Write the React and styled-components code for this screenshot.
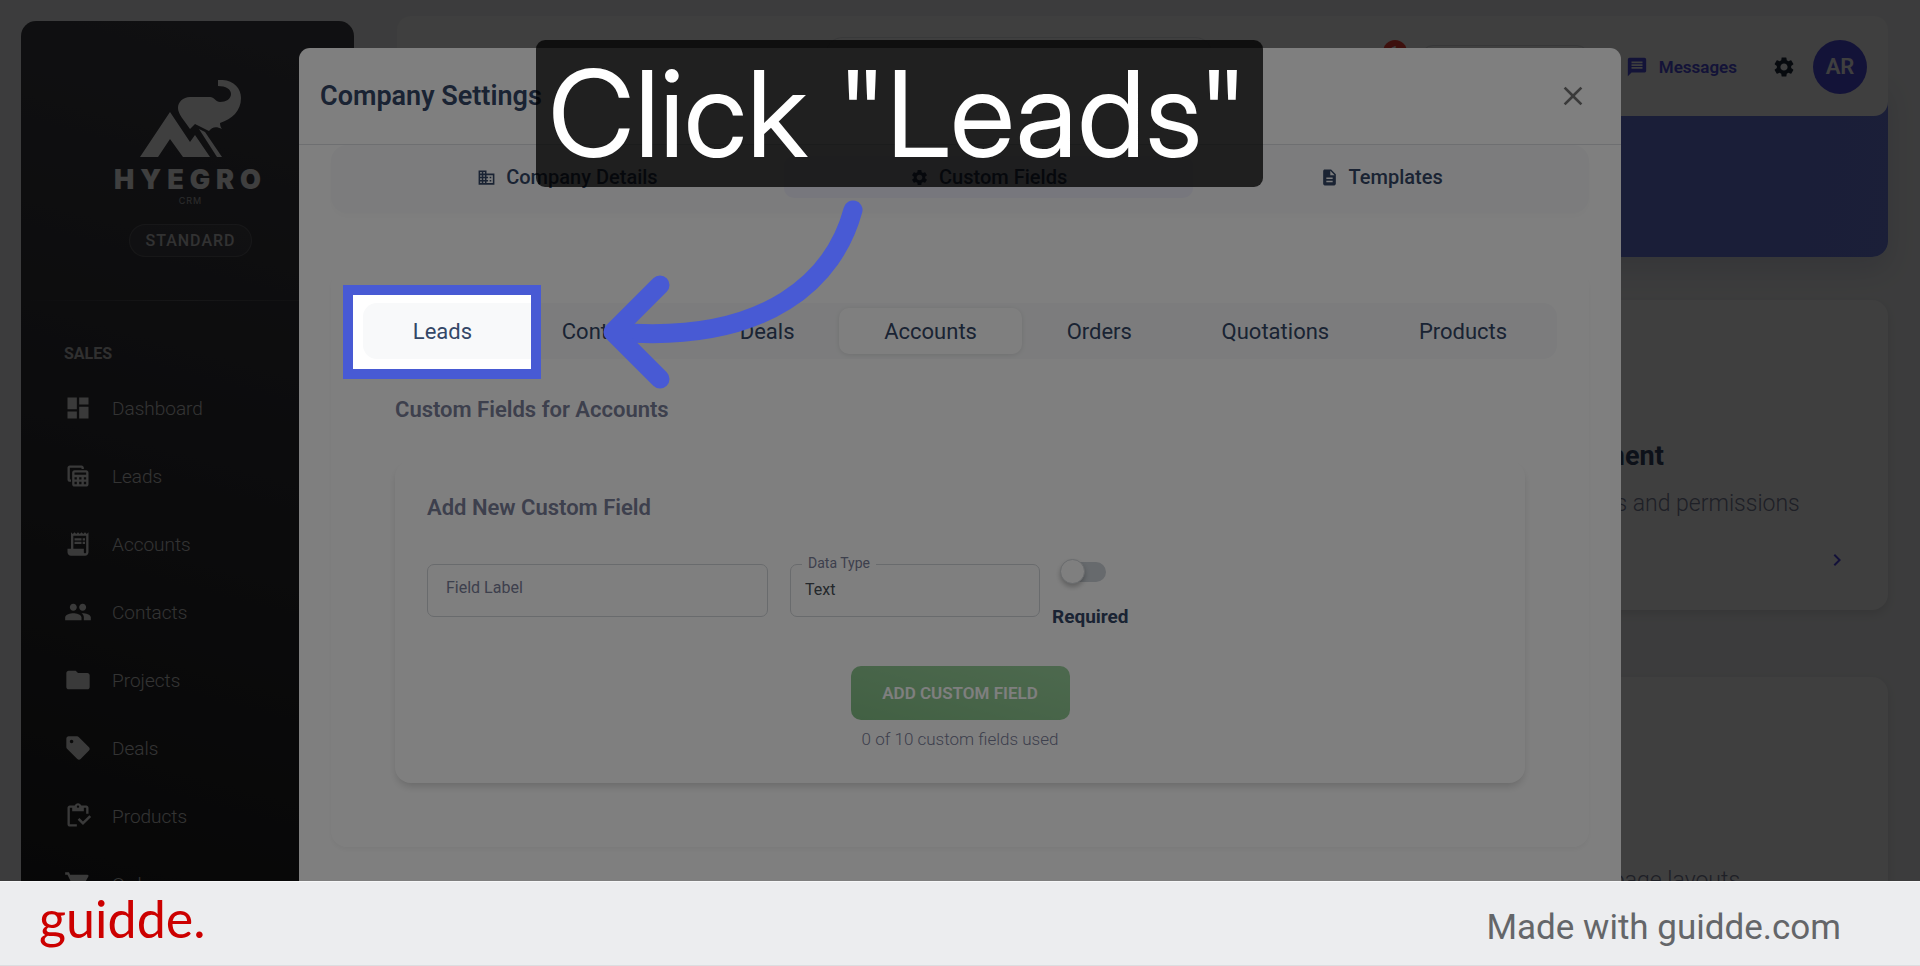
import React from 'react'
import styled, { createGlobalStyle } from 'styled-components'
import {
  MdBusiness,
  MdChevronRight,
  MdClose,
  MdDashboard,
  MdDescription,
  MdFolder,
  MdMessage,
  MdNotifications,
  MdPeople,
  MdReceiptLong,
  MdSell,
  MdSettings,
  MdShoppingCart,
  MdTableView,
} from 'react-icons/md'

const GlobalStyle = createGlobalStyle`
  *, *::before, *::after {
    box-sizing: border-box;
  }
  body {
    margin: 0;
    font-family: Roboto, 'Liberation Sans', sans-serif;
    color: #344767;
  }
  button, input, select {
    font-family: inherit;
  }
  h1, h2, h3, p, ul {
    margin: 0;
    padding: 0;
  }
`

const Page = styled.div`
  display: flex;
  flex-direction: column;
  height: 100vh;
`

const Stage = styled.div`
  position: relative;
  display: flex;
  flex: 1;
  min-height: 0;
  overflow: hidden;
  background: #f1f2f4;
`

/* sidebar */

const Sidebar = styled.aside`
  flex: none;
  width: 333px;
  height: 1000px;
  margin: 21px 43px 0 21px;
  padding-top: 59px;
  border-radius: 15px;
  background: linear-gradient(195deg, #42424a, #191919);
  color: #fff;
`

const Brand = styled.div`
  display: flex;
  flex-direction: column;
  align-items: center;
  padding-left: 6px;
`

const BrandName = styled.div`
  margin-top: 6px;
  font: 900 27px/32px Inter, sans-serif;
  letter-spacing: 6px;
`

const BrandSub = styled.div`
  font: 400 9px/10px Inter, sans-serif;
  letter-spacing: 1px;
  opacity: 0.6;
`

const Plan = styled.div`
  margin-top: 18px;
  padding: 0 15px;
  border: 1px solid rgba(255, 255, 255, 0.15);
  border-radius: 17px;
  background: rgba(255, 255, 255, 0.06);
  font-size: 16px;
  font-weight: 500;
  line-height: 31px;
  letter-spacing: 1px;
  color: #c8c8c8;
`

const Rule = styled.hr`
  height: 1px;
  margin: 43px 0 0;
  border: 0;
  background: linear-gradient(90deg, transparent, rgba(255, 255, 255, 0.2), transparent);
`

const NavTitle = styled.h2`
  margin: 41px 0 0 43px;
  font-size: 16px;
  line-height: 24px;
  font-weight: 700;
  color: #c0c0c0;
`

const NavList = styled.ul`
  margin-top: 8px;
  list-style: none;
`

const NavLink = styled.a`
  display: flex;
  align-items: center;
  gap: 20px;
  height: 68px;
  padding-left: 43px;
  font-size: 19px;
  font-weight: 300;
  color: #d0d0d0;
  text-decoration: none;
  svg {
    font-size: 28px;
    color: #e8e8e8;
  }
`

/* page behind the dialog */

const Main = styled.main`
  flex: 1;
  min-width: 0;
  padding: 16px 32px 0 0;
`

const TopBar = styled.header`
  position: relative;
  z-index: 1;
  display: flex;
  align-items: center;
  height: 100px;
  padding: 2px 21px 0 0;
  border-radius: 14px;
  background: #fcfcfc;
`

const Search = styled.input`
  width: 388px;
  height: 60px;
  margin: 0 auto 0 428px;
  padding: 0 24px;
  border: 1px solid #e2e4e8;
  border-radius: 18px;
  background: #fff;
  font-size: 18px;
`

const Bell = styled.button`
  position: relative;
  display: grid;
  place-items: center;
  width: 40px;
  height: 40px;
  margin-right: 20px;
  border: 0;
  background: none;
  font-size: 24px;
  color: #344767;
`

const Badge = styled.span`
  position: absolute;
  top: -7px;
  right: -6px;
  width: 24px;
  height: 24px;
  border-radius: 50%;
  background: #f44335;
  font-size: 14px;
  line-height: 24px;
  color: #fff;
`

const Workspace = styled.button`
  width: 168px;
  height: 44px;
  margin-right: 37px;
  border: 1px solid #dcdee2;
  border-radius: 12px;
  background: none;
`

const Messages = styled.button`
  display: flex;
  align-items: center;
  gap: 11px;
  margin-right: 35px;
  padding: 0;
  border: 0;
  background: none;
  font-size: 17px;
  font-weight: 600;
  color: #4f4ce0;
  svg {
    font-size: 22px;
  }
`

const Gear = styled.button`
  display: grid;
  place-items: center;
  margin-right: 17px;
  padding: 0;
  border: 0;
  background: none;
  font-size: 24px;
  color: #1e293b;
`

const Avatar = styled.div`
  width: 54px;
  height: 54px;
  border-radius: 50%;
  background: #4f4ce0;
  font-size: 22px;
  font-weight: 600;
  line-height: 54px;
  text-align: center;
  color: #fff;
`

const Banner = styled.div`
  height: 181px;
  margin-top: -40px;
  border-radius: 16px;
  background: linear-gradient(100deg, #5c66f0, #6c7ce0);
  box-shadow: 0 12px 28px rgba(40, 50, 110, 0.14);
`

const Cards = styled.div`
  display: grid;
  grid-template-columns: repeat(3, 1fr);
  gap: 67px 24px;
  margin-top: 43px;
`

const Card = styled.article`
  display: flex;
  flex-direction: column;
  height: 310px;
  padding: 32px 39px 38px 34px;
  border-radius: 16px;
  background: #fdfdfd;
  box-shadow: 0 4px 10px rgba(0, 0, 0, 0.1);
`

const CardIcon = styled.div`
  display: grid;
  place-items: center;
  width: 76px;
  height: 76px;
  margin-bottom: 32px;
  border-radius: 14px;
  background: #eef0ff;
  font-size: 36px;
  color: #4f46e5;
`

const CardTitle = styled.h3`
  font-size: 27px;
  line-height: 32px;
  font-weight: 700;
`

const CardText = styled.p`
  margin-top: 18px;
  font-size: 23px;
  line-height: 28px;
  font-weight: 300;
  color: #7b809a;
  white-space: nowrap;
`

const CardArrow = styled(MdChevronRight)`
  margin: auto 0 0 auto;
  font-size: 24px;
  color: #4f46e5;
`

/* dialog */

const Backdrop = styled.div`
  position: absolute;
  inset: 0;
  z-index: 2;
  display: flex;
  align-items: flex-start;
  justify-content: center;
  padding-top: 48px;
  background: rgba(0, 0, 0, 0.5);
`

const Dialog = styled.section`
  position: relative;
  width: 1322px;
  max-width: calc(100% - 64px);
  min-height: 900px;
  border-radius: 11px;
  background: #fff;
`

const DialogHead = styled.header`
  display: flex;
  align-items: center;
  justify-content: space-between;
  height: 97px;
  padding: 0 32px 0 21px;
  border-bottom: 1px solid #dcdee2;
`

const DialogTitle = styled.h1`
  font-size: 27px;
  line-height: 32px;
  font-weight: 600;
`

const CloseButton = styled.button`
  display: grid;
  place-items: center;
  padding: 0;
  border: 0;
  background: none;
  font-size: 32px;
  color: #757575;
`

const DialogBody = styled.div`
  padding: 0 32px;
`

const Tabs = styled.div`
  display: flex;
  padding: 11px 20px 15px;
  border-radius: 16px;
  background: #f8f9fa;
  box-shadow: 0 4px 6px rgba(0, 0, 0, 0.02);
`

const Tab = styled.button`
  display: flex;
  flex: 1 1 auto;
  align-items: center;
  justify-content: center;
  gap: 10px;
  height: 42px;
  padding: 0;
  border: 0;
  border-radius: 10px;
  background: ${({ $active }) => ($active ? '#eeeefb' : 'none')};
  font-size: 20px;
  font-weight: 500;
  color: #344767;
  svg {
    font-size: 19px;
  }
`

const Panel = styled.div`
  margin-top: 57px;
  padding: 33px 32px 32px;
  border-radius: 16px;
  background: #fff;
  box-shadow: 0 3px 5px rgba(0, 0, 0, 0.04);
`

const SubTabs = styled.div`
  display: flex;
  padding: 5px;
  border-radius: 14px;
  background: #f8f9fa;
`

const SubTab = styled.button`
  flex: 1 1 auto;
  height: 46px;
  padding: 0;
  border: 0;
  border-radius: 10px;
  background: ${({ $active }) => ($active ? '#fff' : 'none')};
  box-shadow: ${({ $active }) => ($active ? '0 1px 5px rgba(0, 0, 0, 0.1)' : 'none')};
  font-size: 22px;
  color: #344767;
`

const Section = styled.div`
  padding: 37px 32px 0;
`

const Heading = styled.h2`
  font-size: 22px;
  line-height: 28px;
  font-weight: 600;
  color: #7b809a;
`

const FieldCard = styled.form`
  display: flex;
  flex-direction: column;
  margin: 37px 0 32px;
  padding: 33px 32px 32px;
  border-radius: 16px;
  box-shadow: 0 5px 8px -2px rgba(0, 0, 0, 0.18);
`

const FieldRow = styled.div`
  display: flex;
  align-items: flex-start;
  gap: 12px;
  margin-top: 42px;
`

const Inputs = styled.div`
  display: flex;
  gap: 22px;
`

const TextInput = styled.input`
  width: 341px;
  height: 53px;
  padding: 0 18px 6px;
  border: 1px solid #d2d6da;
  border-radius: 7px;
  background: none;
  font-size: 16px;
  &::placeholder {
    color: #7b809a;
    opacity: 1;
  }
`

const SelectBox = styled.div`
  position: relative;
  width: 250px;
`

const SelectLabel = styled.label`
  position: absolute;
  top: -11px;
  left: 12px;
  padding: 0 6px;
  background: #fff;
  font-size: 14px;
  line-height: 20px;
  color: #7b809a;
`

const Select = styled.select`
  width: 100%;
  height: 53px;
  padding: 0 14px 2px;
  border: 1px solid #d2d6da;
  border-radius: 7px;
  background: none;
  appearance: none;
  font-size: 16px;
  color: #495057;
`

const Toggle = styled.label`
  display: flex;
  flex-direction: column;
  gap: 17px;
  height: 70px;
  font-size: 19px;
  line-height: 24px;
  font-weight: 700;
`

const Switch = styled.input`
  position: relative;
  appearance: none;
  width: 42px;
  height: 20px;
  margin: -2px 0 6px 12px;
  border-radius: 10px;
  background: #ced4da;
  &::before {
    content: '';
    position: absolute;
    top: -3px;
    left: -4px;
    width: 25px;
    height: 25px;
    border: 1px solid #d2d6da;
    border-radius: 50%;
    background: #fff;
    box-shadow: 0 3px 5px rgba(0, 0, 0, 0.25);
  }
`

const AddButton = styled.button`
  align-self: center;
  width: 219px;
  height: 54px;
  margin-top: 32px;
  border: 0;
  border-radius: 10px;
  background: linear-gradient(195deg, #66bb6a, #43a047);
  font-size: 17px;
  font-weight: 600;
  text-transform: uppercase;
  color: #fff;
  opacity: 0.65;
`

const Usage = styled.p`
  margin-top: 7px;
  font-size: 17px;
  line-height: 24px;
  font-weight: 300;
  text-align: center;
  color: #7b809a;
`

/* guide overlay */

const Spotlight = styled.div`
  position: absolute;
  top: 237px;
  left: 44px;
  width: 198px;
  height: 94px;
  border: 10px solid #485ad4;
  box-shadow: 0 0 0 3000px rgba(0, 0, 0, 0.5);
  pointer-events: none;
`

const Callout = styled.div`
  position: absolute;
  top: -8px;
  left: 237px;
  width: 727px;
  padding: 0 12px;
  border-radius: 9px;
  background: rgba(0, 0, 0, 0.75);
  font-family: 'Inter Display', Inter, sans-serif;
  font-size: 120px;
  font-variation-settings: 'opsz' 32;
  line-height: 147px;
  white-space: nowrap;
  color: #fff;
`

const Arrow = styled.svg`
  position: absolute;
  top: 142px;
  left: 291px;
  width: 290px;
  height: 210px;
  pointer-events: none;
`

const Footer = styled.footer`
  display: flex;
  flex: none;
  align-items: center;
  justify-content: space-between;
  height: 85px;
  padding: 0 79px 0 39px;
  border-top: 1px solid #f6f7f8;
  border-bottom: 1px solid #dcdde0;
  background: #ecedef;
`

const Logo = styled.a`
  padding-bottom: 11px;
  font: 400 52px/60px Lato, sans-serif;
  color: #c00;
  text-decoration: none;
`

const MadeWith = styled.p`
  padding-top: 8px;
  font-size: 35px;
  line-height: 40px;
  color: #646669;
`

const ClipboardIcon = () => (
  <svg width="1em" height="1em" viewBox="0 0 24 24" fill="currentColor" aria-hidden="true">
    <path d="M5 5h2v3h10V5h2v5h2V5c0-1.1-.9-2-2-2h-4.18C14.4 1.84 13.3 1 12 1s-2.4.84-2.82 2H5c-1.1 0-2 .9-2 2v14c0 1.1.9 2 2 2h6v-2H5V5zm7-2c.55 0 1 .45 1 1s-.45 1-1 1-1-.45-1-1 .45-1 1-1z" />
    <path d="M21.75 11.25l-5.5 5.5-3-3-1.5 1.5 4.5 4.5 7-7z" />
  </svg>
)

const navItems = [
  { label: 'Dashboard', Icon: MdDashboard },
  { label: 'Leads', Icon: MdTableView },
  { label: 'Accounts', Icon: MdReceiptLong },
  { label: 'Contacts', Icon: MdPeople },
  { label: 'Projects', Icon: MdFolder },
  { label: 'Deals', Icon: MdSell },
  { label: 'Products', Icon: ClipboardIcon },
  { label: 'Orders', Icon: MdShoppingCart },
]

const tabs = [
  { label: 'Company Details', Icon: MdBusiness },
  { label: 'Custom Fields', Icon: MdSettings, active: true },
  { label: 'Templates', Icon: MdDescription },
]

const modules = ['Leads', 'Contacts', 'Deals', 'Accounts', 'Orders', 'Quotations', 'Products']

const cards = [
  { title: 'Company', text: 'Company settings', Icon: MdBusiness },
  { title: 'Messages', text: 'Configure messages', Icon: MdMessage },
  { title: 'User Management', text: 'Manage user roles and permissions', Icon: MdPeople },
  { title: 'Products', text: 'Manage products', Icon: ClipboardIcon },
  { title: 'Deals', text: 'Manage stages', Icon: MdSell },
  { title: 'Layouts', text: 'Customize team page layouts', Icon: MdDashboard },
]

const ElephantMark = () => (
  <svg width="102" height="78" viewBox="0 0 102 78" fill="#fff" aria-hidden="true">
    <path d="M0 77 30 32l20 30 5-7 15 22H43L30 59 18 77z" />
    <path d="M50 49C44 40 38 34 38 28c0-6 5-11 12-11h20c4 0 6 5 10 5 6 0 11-3 11-8 0-5-5-8-13-8V0c14-1 23 7 23 18 0 13-9 21-21 25 0 3 1 5 2 6-6-3-10-2-13 2L55 44z" />
    <path d="M65 52 82 77h-5L59 49z" />
  </svg>
)

const App = () => (
  <>
    <GlobalStyle />
    <Page>
      <Stage>
        <Sidebar>
          <Brand>
            <ElephantMark />
            <BrandName>HYEGRO</BrandName>
            <BrandSub>CRM</BrandSub>
            <Plan>STANDARD</Plan>
          </Brand>
          <Rule />
          <NavTitle>SALES</NavTitle>
          <NavList>
            {navItems.map(({ label, Icon }) => (
              <li key={label}>
                <NavLink href="#">
                  <Icon />
                  {label}
                </NavLink>
              </li>
            ))}
          </NavList>
        </Sidebar>

        <Main>
          <TopBar>
            <Search aria-label="Search" />
            <Bell aria-label="Notifications">
              <MdNotifications />
              <Badge>1</Badge>
            </Bell>
            <Workspace aria-label="Workspace" />
            <Messages>
              <MdMessage />
              Messages
            </Messages>
            <Gear aria-label="Settings">
              <MdSettings />
            </Gear>
            <Avatar>AR</Avatar>
          </TopBar>
          <Banner />
          <Cards>
            {cards.map(({ title, text, Icon }) => (
              <Card key={title}>
                <CardIcon>
                  <Icon />
                </CardIcon>
                <CardTitle>{title}</CardTitle>
                <CardText>{text}</CardText>
                <CardArrow />
              </Card>
            ))}
          </Cards>
        </Main>

        <Backdrop>
          <Dialog role="dialog" aria-labelledby="dialog-title">
            <DialogHead>
              <DialogTitle id="dialog-title">Company Settings</DialogTitle>
              <CloseButton aria-label="Close">
                <MdClose />
              </CloseButton>
            </DialogHead>
            <DialogBody>
              <Tabs>
                {tabs.map(({ label, Icon, active }) => (
                  <Tab key={label} $active={active}>
                    <Icon />
                    {label}
                  </Tab>
                ))}
              </Tabs>
              <Panel>
                <SubTabs>
                  {modules.map(name => (
                    <SubTab key={name} $active={name === 'Accounts'}>
                      {name}
                    </SubTab>
                  ))}
                </SubTabs>
                <Section>
                  <Heading>Custom Fields for Accounts</Heading>
                  <FieldCard>
                    <Heading as="h3">Add New Custom Field</Heading>
                    <FieldRow>
                      <Inputs>
                        <TextInput placeholder="Field Label" aria-label="Field Label" />
                        <SelectBox>
                          <Select id="data-type">
                            <option>Text</option>
                          </Select>
                          <SelectLabel htmlFor="data-type">Data Type</SelectLabel>
                        </SelectBox>
                      </Inputs>
                      <Toggle>
                        <Switch type="checkbox" />
                        Required
                      </Toggle>
                    </FieldRow>
                    <AddButton type="button" disabled>
                      Add Custom Field
                    </AddButton>
                    <Usage>0 of 10 custom fields used</Usage>
                  </FieldCard>
                </Section>
              </Panel>
            </DialogBody>
            <Spotlight />
            <Callout>Click "Leads"</Callout>
            <Arrow
              viewBox="590 190 290 210"
              fill="none"
              stroke="#485ad4"
              strokeWidth="19"
              strokeLinecap="round"
              strokeLinejoin="round"
            >
              <path d="M853 210C835 277 770 345 615 332" />
              <path d="M660 285 613 332l47 47" />
            </Arrow>
          </Dialog>
        </Backdrop>
      </Stage>
      <Footer>
        <Logo href="#">guidde.</Logo>
        <MadeWith>Made with guidde.com</MadeWith>
      </Footer>
    </Page>
  </>
)

export default App
